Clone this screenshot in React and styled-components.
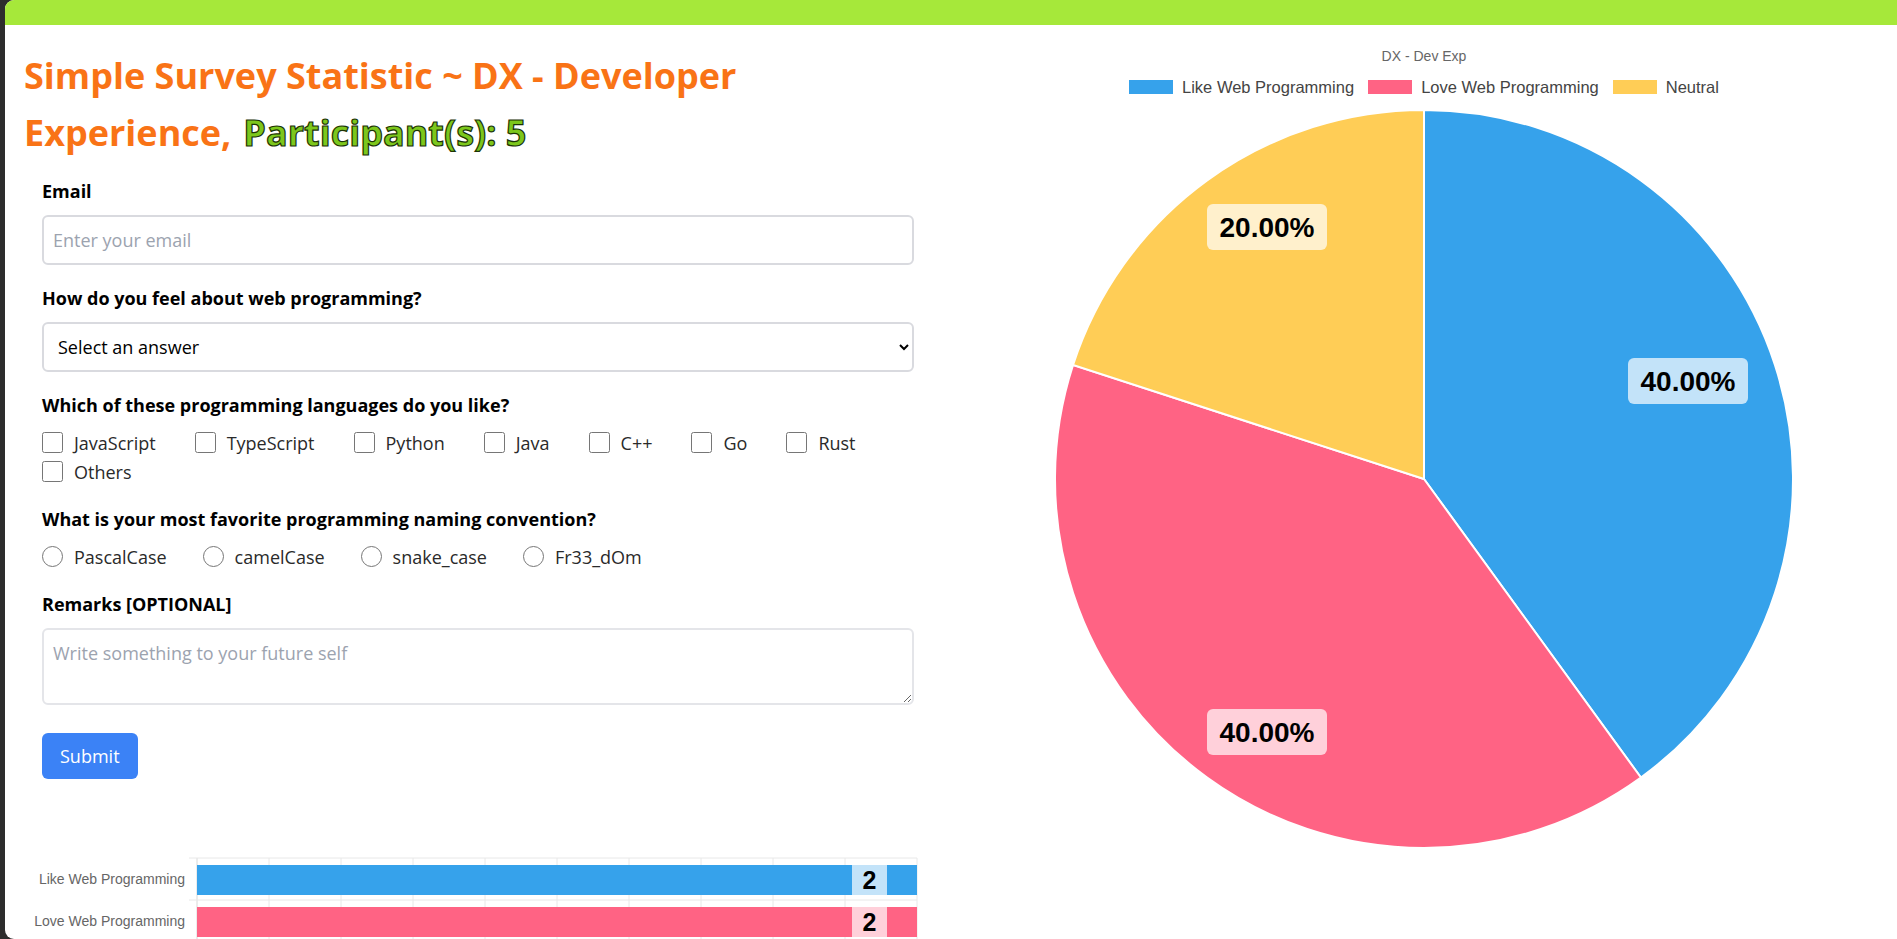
import React from "react";
import styled, { createGlobalStyle } from "styled-components";

const GlobalStyle = createGlobalStyle`
  html, body { margin: 0; padding: 0; background: #2d2d2d; overflow: hidden; }
  * { box-sizing: border-box; }
`;

const FONT = `"Open Sans", "Noto Sans", sans-serif`;
const CHART_FONT = `"Liberation Sans", Arial, sans-serif`;

const Frame = styled.div`
  margin-left: 5px;
  height: 100vh;
  background: #fff;
  border-radius: 9px 0 0 9px;
  overflow: hidden;
  display: flex;
  flex-direction: column;
`;
const TopBar = styled.div`
  flex: none;
  height: 25px;
  background: #a6e83a;
`;
const Main = styled.main`
  flex: 1;
  min-height: 0;
  display: grid;
  grid-template-columns: 1fr 1fr;
`;
const LeftCol = styled.section`
  min-width: 0;
  padding: 22px 19px 0;
`;
const Title = styled.h1`
  margin: 0;
  font-family: ${FONT};
  font-weight: 700;
  font-size: 36px;
  line-height: 57px;
  color: #f97316;
`;
const Participants = styled.span`
  margin-left: 12px;
  color: #7cc71c;
  -webkit-text-stroke: 1.2px #1b3306;
`;
const Form = styled.form`
  margin: 16px 18px 0;
  display: flex;
  flex-direction: column;
  gap: 19px;
  font-family: ${FONT};
`;
const Field = styled.div`
  display: flex;
  flex-direction: column;
`;
const Label = styled.label`
  font-size: 18px;
  font-weight: 700;
  line-height: 28px;
  color: #000;
  margin-bottom: ${(p) => (p.$tight ? "9px" : "10px")};
`;
const controlBase = `
  width: 100%;
  border: 2px solid #d9dadf;
  border-radius: 6px;
  font-family: ${FONT};
  font-size: 18px;
  color: #000;
  background: #fff;
  outline: none;
  &::placeholder { color: #9ca3af; }
`;
const TextInput = styled.input`
  ${controlBase}
  height: 50px;
  padding: 0 9px;
`;
const Select = styled.select`
  ${controlBase}
  height: 50px;
  padding: 0 10px;
`;
const TextArea = styled.textarea`
  ${controlBase}
  height: 77px;
  padding: 9px 9px;
  line-height: 28px;
  border-color: #e4e5e9;
  resize: vertical;
`;
const Options = styled.div`
  display: flex;
  flex-wrap: wrap;
  column-gap: ${(p) => p.$gap}px;
`;
const Option = styled.label`
  display: flex;
  align-items: center;
  gap: 11px;
  height: 29px;
  font-size: 18px;
  color: #2a2a2a;
  input {
    width: 21px;
    height: 21px;
    margin: 0;
  }
`;
const SubmitButton = styled.button`
  align-self: flex-start;
  margin-top: 9px;
  height: 46px;
  padding: 0 18px;
  border: none;
  border-radius: 6px;
  background: #3b82f6;
  color: #fff;
  font-family: ${FONT};
  font-size: 18px;
`;
const BarChart = styled.svg`
  display: block;
  margin-top: 71px;
`;
const RightCol = styled.section`
  min-width: 0;
  padding-top: 23px;
  display: flex;
  flex-direction: column;
  align-items: center;
  font-family: ${CHART_FONT};
`;
const ChartTitle = styled.div`
  font-size: 14px;
  line-height: 17px;
  color: #666;
`;
const Legend = styled.ul`
  list-style: none;
  margin: 13px 0 0;
  padding: 0;
  display: flex;
  gap: 14px;
`;
const LegendItem = styled.li`
  display: flex;
  align-items: center;
  gap: 9px;
  font-size: 16.5px;
  line-height: 18px;
  color: #444;
`;
const Swatch = styled.span`
  width: 44px;
  height: 14px;
  background: ${(p) => p.$color};
`;
const Pie = styled.svg`
  display: block;
  margin-top: 13px;
`;

const slices = [
  { label: "Like Web Programming", value: 2, color: "#36A2EB", lx: 737, ly: 272 },
  { label: "Love Web Programming", value: 2, color: "#FF6384", lx: 316, ly: 623 },
  { label: "Neutral", value: 1, color: "#FFCD56", lx: 316, ly: 118 },
];
const languages = ["JavaScript", "TypeScript", "Python", "Java", "C++", "Go", "Rust", "Others"];
const conventions = ["PascalCase", "camelCase", "snake_case", "Fr33_dOm"];

function pt(cx, cy, r, deg) {
  const a = (deg * Math.PI) / 180;
  return [cx + r * Math.sin(a), cy - r * Math.cos(a)];
}

function PieChart() {
  const cx = 473, cy = 370, r = 369;
  const total = slices.reduce((s, x) => s + x.value, 0);
  let start = 0;
  const arcs = slices.map((s) => {
    const span = (s.value / total) * 360;
    const [x1, y1] = pt(cx, cy, r, start);
    const [x2, y2] = pt(cx, cy, r, start + span);
    const d = `M${cx} ${cy} L${x1} ${y1} A${r} ${r} 0 ${span > 180 ? 1 : 0} 1 ${x2} ${y2} Z`;
    start += span;
    return { ...s, d, pct: ((s.value / total) * 100).toFixed(2) + "%" };
  });
  return (
    <Pie width="946" height="740" viewBox="0 0 946 740">
      {arcs.map((a) => (
        <path key={a.label} d={a.d} fill={a.color} stroke="#fff" strokeWidth="2" />
      ))}
      {arcs.map((a) => (
        <g key={a.label + "t"}>
          <rect x={a.lx - 60} y={a.ly - 23} width="120" height="46" rx="6" fill="rgba(255,255,255,0.7)" />
          <text x={a.lx} y={a.ly + 10} textAnchor="middle" fontFamily={CHART_FONT} fontWeight="700" fontSize="28" fill="#000">
            {a.pct}
          </text>
        </g>
      ))}
    </Pie>
  );
}

function HorizontalBars() {
  const x0 = 173, step = 72, ticks = 10;
  const rows = slices.slice(0, 2);
  return (
    <BarChart width="908" height="100" viewBox="0 0 908 100">
      {Array.from({ length: ticks + 1 }, (_, i) => (
        <line key={i} x1={x0 + i * step} x2={x0 + i * step} y1="8" y2="100" stroke={i === 0 ? "#d8d8d8" : "#e8e8e8"} strokeWidth="1" />
      ))}
      {[8, 50, 92].map((y) => (
        <line key={y} x1="165" x2={x0 + ticks * step} y1={y} y2={y} stroke="#e8e8e8" />
      ))}
      {rows.map((r, i) => {
        const top = 8 + i * 42;
        const w = (r.value / 2) * ticks * step;
        return (
          <g key={r.label}>
            <text x="161" y={top + 26} textAnchor="end" fontFamily={CHART_FONT} fontSize="14" fill="#666">
              {r.label}
            </text>
            <rect x={x0} y={top + 7} width={w} height="30" fill={r.color} />
            <rect x={x0 + w - 65} y={top + 7} width="35" height="30" fill="rgba(255,255,255,0.7)" />
            <text x={x0 + w - 47.5} y={top + 31} textAnchor="middle" fontFamily={CHART_FONT} fontWeight="700" fontSize="25" fill="#000">
              {r.value}
            </text>
          </g>
        );
      })}
    </BarChart>
  );
}

export default function App() {
  return (
    <>
      <GlobalStyle />
      <Frame>
        <TopBar />
        <Main>
          <LeftCol>
            <Title>
              Simple Survey Statistic ~ DX - Developer Experience,
              <Participants>Participant(s): 5</Participants>
            </Title>
            <Form onSubmit={(e) => e.preventDefault()}>
              <Field>
                <Label htmlFor="email">Email</Label>
                <TextInput id="email" type="email" placeholder="Enter your email" />
              </Field>
              <Field>
                <Label htmlFor="feel">How do you feel about web programming?</Label>
                <Select id="feel" defaultValue="">
                  <option value="">Select an answer</option>
                  <option>Like Web Programming</option>
                  <option>Love Web Programming</option>
                  <option>Neutral</option>
                </Select>
              </Field>
              <Field>
                <Label as="div" $tight>Which of these programming languages do you like?</Label>
                <Options $gap={39}>
                  {languages.map((l) => (
                    <Option key={l}>
                      <input type="checkbox" />
                      {l}
                    </Option>
                  ))}
                </Options>
              </Field>
              <Field>
                <Label as="div" $tight>What is your most favorite programming naming convention?</Label>
                <Options $gap={36}>
                  {conventions.map((c) => (
                    <Option key={c}>
                      <input type="radio" name="conv" />
                      {c}
                    </Option>
                  ))}
                </Options>
              </Field>
              <Field>
                <Label htmlFor="remarks">Remarks [OPTIONAL]</Label>
                <TextArea id="remarks" placeholder="Write something to your future self" />
              </Field>
              <SubmitButton type="submit">Submit</SubmitButton>
            </Form>
            <HorizontalBars />
          </LeftCol>
          <RightCol>
            <ChartTitle>DX - Dev Exp</ChartTitle>
            <Legend>
              {slices.map((s) => (
                <LegendItem key={s.label}>
                  <Swatch $color={s.color} />
                  {s.label}
                </LegendItem>
              ))}
            </Legend>
            <PieChart />
          </RightCol>
        </Main>
      </Frame>
    </>
  );
}
